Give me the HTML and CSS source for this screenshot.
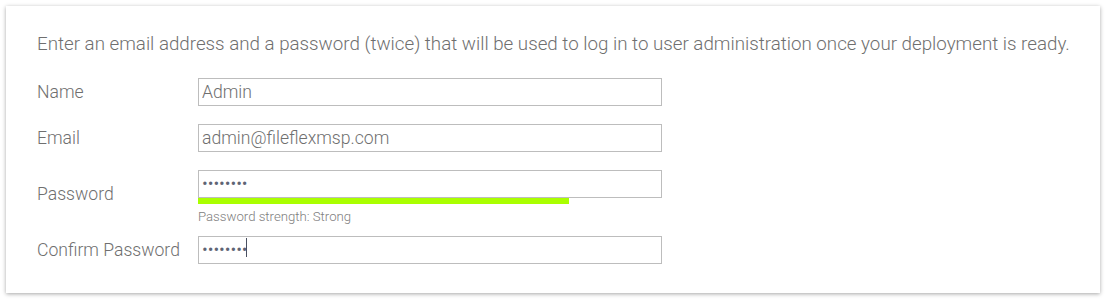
FILE: index.html
```html
<!DOCTYPE html>
<html lang="en">
<head>
<meta charset="utf-8">
<title>Admin account</title>
<link rel="stylesheet" href="styles.css">
</head>
<body>
<div class="card">
  <p class="intro">Enter an email address and a password (twice) that will be used to log in to user administration once your deployment is ready.</p>
  <div class="form">
    <div class="row">
      <label class="label" for="name">Name</label>
      <div class="field"><input class="input" id="name" type="text" value="Admin"></div>
    </div>
    <div class="row">
      <label class="label" for="email">Email</label>
      <div class="field"><input class="input" id="email" type="text" value="admin@fileflexmsp.com"></div>
    </div>
    <div class="row row-pw">
      <label class="label label-pw" for="pw">Password</label>
      <div class="field">
        <input class="input input-pw" id="pw" type="password" value="abcdefgh">
        <div class="strength"><div class="strength-fill" style="width:80%"></div></div>
        <div class="help">Password strength: Strong</div>
      </div>
    </div>
    <div class="row">
      <label class="label" for="pw2">Confirm Password</label>
      <div class="field caret-wrap">
        <input class="input input-pw" id="pw2" type="password" value="abcdefgh">
        <span class="caret"></span>
      </div>
    </div>
  </div>
</div>
</body>
</html>
```

FILE: styles.css
```css
html, body {
  margin: 0;
  padding: 0;
  background: #ffffff;
}

body {
  font-family: Roboto, "Liberation Sans", sans-serif;
  padding: 6px;
}

.card {
  width: 1094px;
  height: 287px;
  box-sizing: border-box;
  background: #ffffff;
  box-shadow: 0 1px 4px rgba(0, 0, 0, 0.35);
  padding: 27px 31px 0 31px;
}

.intro {
  margin: 0;
  font-size: 18.75px;
  font-weight: 300;
  line-height: 22px;
  color: #6f6f6f;
  white-space: nowrap;
}

.form {
  margin-top: 23px;
  display: flex;
  flex-direction: column;
}

.row {
  display: flex;
  align-items: flex-start;
}

.row + .row {
  margin-top: 18px;
}

.row-pw + .row {
  margin-top: 12px;
}

.label {
  width: 161px;
  flex: none;
  font-size: 17.6px;
  font-weight: 300;
  line-height: 28px;
  color: #6f6f6f;
}

.label-pw {
  padding-top: 10px;
}

.field {
  width: 464px;
  display: flex;
  flex-direction: column;
}

.input {
  width: 464px;
  height: 28px;
  box-sizing: border-box;
  margin: 0;
  border: 1px solid #bdbdbd;
  border-radius: 0;
  padding: 0 3px;
  font-family: Roboto, "Liberation Sans", sans-serif;
  font-size: 17.6px;
  font-weight: 300;
  color: #6f6f6f;
  background: #ffffff;
  outline: none;
}

.input-pw {
  color: #5e6474;
  font-weight: 300;
  letter-spacing: 0;
}

.strength {
  height: 6px;
  width: 464px;
}

.strength-fill {
  height: 6px;
  background: #aaff00;
}

.help {
  font-size: 13.2px;
  font-weight: 300;
  line-height: 15px;
  margin-top: 5px;
  color: #808080;
}

.caret-wrap {
  position: relative;
}

.caret {
  position: absolute;
  left: 48px;
  top: 2px;
  width: 1px;
  height: 19px;
  background: #4a5060;
}
```
